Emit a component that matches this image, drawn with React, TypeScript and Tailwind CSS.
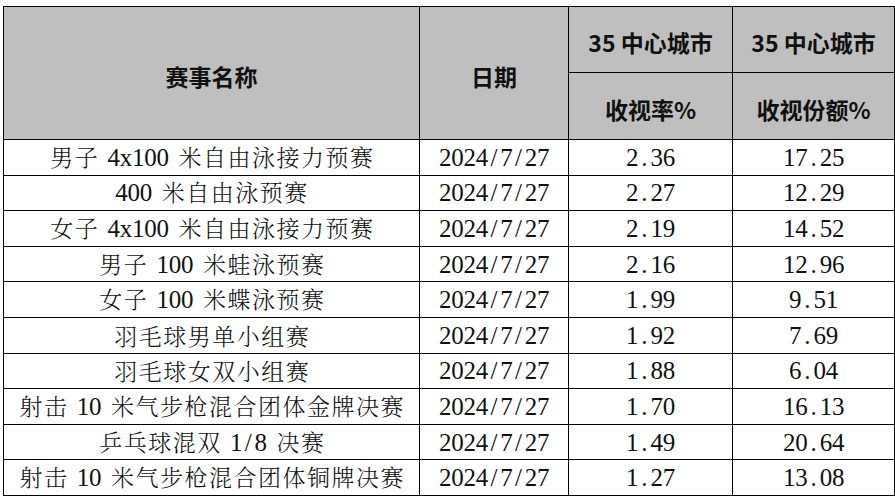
import React from "react";

const rows: [string, string, string, string][] = [
  ["男子 4x100 米自由泳接力预赛", "2024/7/27", "2.36", "17.25"],
  ["400 米自由泳预赛", "2024/7/27", "2.27", "12.29"],
  ["女子 4x100 米自由泳接力预赛", "2024/7/27", "2.19", "14.52"],
  ["男子 100 米蛙泳预赛", "2024/7/27", "2.16", "12.96"],
  ["女子 100 米蝶泳预赛", "2024/7/27", "1.99", "9.51"],
  ["羽毛球男单小组赛", "2024/7/27", "1.92", "7.69"],
  ["羽毛球女双小组赛", "2024/7/27", "1.88", "6.04"],
  ["射击 10 米气步枪混合团体金牌决赛", "2024/7/27", "1.70", "16.13"],
  ["乒乓球混双 1/8 决赛", "2024/7/27", "1.49", "20.64"],
  ["射击 10 米气步枪混合团体铜牌决赛", "2024/7/27", "1.27", "13.08"],
];

function Sim({ text }: { text: string }) {
  return (
    <span className="inline-flex items-baseline">
      {Array.from(text).map((ch, i) =>
        ch === " " ? (
          <span key={i} className="inline-block w-[9px]" />
        ) : ch.charCodeAt(0) < 128 ? (
          <span
            key={i}
            className="inline-block w-[12.25px] text-center text-[25px] [font-family:'Liberation_Serif',serif]"
          >
            {ch}
          </span>
        ) : (
          <span
            key={i}
            className="inline-block w-[24.5px] text-center text-[23px] font-light [font-family:'Noto_Serif_CJK_SC','Noto_Sans_CJK_SC',serif]"
          >
            {ch}
          </span>
        )
      )}
    </span>
  );
}

export default function App() {
  const th =
    "border border-black bg-[#bfbfbf] text-center align-middle text-[23px] font-bold text-[#111] [font-family:'Noto_Sans_CJK_SC',sans-serif]";
  const td = "border border-black text-center align-middle p-0 text-[#111] leading-none";
  return (
    <div className="bg-white w-[895px] h-[499px] pt-[6px] pl-[3px]">
      <table className="table-fixed border-collapse w-[891px]">
        <colgroup>
          <col className="w-[416px]" />
          <col className="w-[149px]" />
          <col className="w-[164px]" />
          <col className="w-[162px]" />
        </colgroup>
        <thead>
          <tr className="h-[66px]">
            <th rowSpan={2} className={th + " pt-[6px]"}>
              赛事名称
            </th>
            <th rowSpan={2} className={th + " pt-[6px]"}>
              日期
            </th>
            <th className={th + " pt-[6px]"}>35 中心城市</th>
            <th className={th + " pt-[6px]"}>35 中心城市</th>
          </tr>
          <tr className="h-[67px]">
            <th className={th + " pt-[6px]"}>收视率%</th>
            <th className={th + " pt-[6px]"}>收视份额%</th>
          </tr>
        </thead>
        <tbody>
          {rows.map((r, i) => (
            <tr key={i} className="h-[35.6px]">
              {r.map((c, j) => (
                <td key={j} className={td}>
                  <Sim text={c} />
                </td>
              ))}
            </tr>
          ))}
        </tbody>
      </table>
    </div>
  );
}
